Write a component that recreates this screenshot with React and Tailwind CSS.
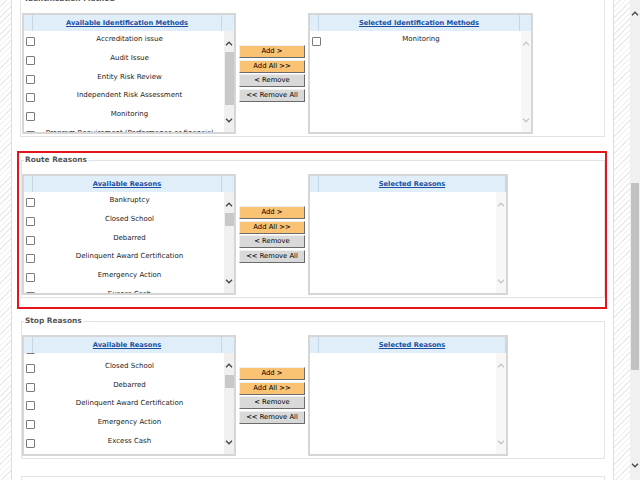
import React from "react";

const idMethods = [
  "Accreditation issue",
  "Audit Issue",
  "Entity Risk Review",
  "Independent Risk Assessment",
  "Monitoring",
  "Program Requirement (Performance or financial condition)",
];

const reasons = [
  "Bankruptcy",
  "Closed School",
  "Debarred",
  "Delinquent Award Certification",
  "Emergency Action",
  "Excess Cash",
  "Fraud",
];

function Chevron({ up, light }) {
  return (
    <svg width="8" height="5" viewBox="0 0 8 5">
      <polyline
        points={up ? "1,4.3 4,1.2 7,4.3" : "1,0.7 4,3.8 7,0.7"}
        fill="none"
        stroke={light ? "#c6c6c6" : "#454545"}
        strokeWidth="1.3"
      />
    </svg>
  );
}

function ListScroll({ light, thumbClass }) {
  return (
    <div className={light ? "flex w-[10px] shrink-0 flex-col items-center bg-[#f7f7f7]" : "flex w-[10px] shrink-0 flex-col items-center bg-[#f0f0f0]"}>
      <div className="mt-[9px] flex h-[6px] items-center">
        <Chevron up light={light} />
      </div>
      {thumbClass ? <div className={thumbClass} /> : null}
      <div className="mb-[9px] mt-auto flex h-[6px] items-center">
        <Chevron light={light} />
      </div>
    </div>
  );
}

function Row({ label }) {
  return (
    <div className="flex h-[18.8px] items-start overflow-hidden">
      <div className="ml-[2px] mt-[6px] h-[9px] w-[9px] shrink-0 rounded-[1px] border border-[#7b7b7b] bg-white" />
      <div className="mt-[3px] flex-1 text-center text-[7px] leading-[10px] text-[#222]">{label}</div>
    </div>
  );
}

function ListBox({ title, items, widthClass, lastClass, offsetClass, light, thumbClass }) {
  return (
    <div className={`flex h-[121px] shrink-0 flex-col border-2 border-[#d6d6d6] bg-white ${widthClass}`}>
      <div className="flex h-[16px] shrink-0 bg-[#dfeef8]">
        <div className="w-[9px] border-r border-[#c3d7e8]" />
        <div className="flex flex-1 items-center justify-center border-r border-[#c3d7e8]">
          <a className="cursor-pointer text-[6.7px] font-bold text-[#1c4f9f] underline">{title}</a>
        </div>
        <div className={lastClass} />
      </div>
      <div className="flex min-h-0 flex-1">
        <div className="min-w-0 flex-1 overflow-hidden">
          <div className={offsetClass}>
            {items.map((item, i) => (
              <Row key={i} label={item} />
            ))}
          </div>
        </div>
        <ListScroll light={light} thumbClass={thumbClass} />
      </div>
    </div>
  );
}

function Buttons() {
  const base =
    "h-[13px] w-full border border-t-[#efefef] border-l-[#efefef] border-r-[#6b6b6b] border-b-[#6b6b6b] text-[6.8px] leading-[11px] text-black";
  return (
    <div className="ml-[3px] flex w-[66px] shrink-0 flex-col gap-[1.6px] pt-[32px]">
      <button className={`${base} bg-[#fac273]`}>Add &gt;</button>
      <button className={`${base} bg-[#fac273]`}>Add All &gt;&gt;</button>
      <button className={`${base} bg-[#d9d9d9]`}>&lt; Remove</button>
      <button className={`${base} bg-[#d9d9d9]`}>&lt;&lt; Remove All</button>
    </div>
  );
}

function Legend({ children }) {
  return (
    <div className="-mt-[6px] ml-[2px] w-fit bg-white px-[1px] text-[7.4px] font-bold leading-[10px] text-[#555]">
      {children}
    </div>
  );
}

function ReasonsSection({ title, items, offsetClass, thumbClass }) {
  return (
    <>
      <Legend>{title}</Legend>
      <div className="mt-[9px] flex items-start">
        <ListBox
          title="Available Reasons"
          items={items}
          widthClass="w-[214px]"
          lastClass="w-[12px]"
          offsetClass={offsetClass}
          thumbClass={thumbClass}
        />
        <Buttons />
        <div className="ml-[3px]">
          <ListBox title="Selected Reasons" items={[]} widthClass="w-[200px]" lastClass="w-0" light />
        </div>
      </div>
    </>
  );
}

export default function App() {
  const hatch =
    "bg-[repeating-linear-gradient(135deg,#ebebeb_0px,#ebebeb_1px,#ffffff_1px,#ffffff_4px)]";
  return (
    <div className="flex h-[480px] w-[640px] overflow-hidden bg-white font-['DejaVu_Sans',Verdana,sans-serif]">
      <div className={`w-[11px] shrink-0 ${hatch}`} />
      <div className="w-px shrink-0 bg-[#d3dfec]" />

      <main className="w-[601px] shrink-0 px-[8px]">
        {/* Identification Method */}
        <div className="-mt-[1px] border border-[#e3e3e3] pb-[2px] pl-[1px]">
          <Legend>Identification Method</Legend>
          <div className="mt-[9px] flex items-start">
            <ListBox
              title="Available Identification Methods"
              items={idMethods}
              widthClass="w-[214px]"
              lastClass="w-[12px]"
              thumbClass="mt-[6px] h-[53px] w-[9px] bg-[#c8c8c8]"
            />
            <Buttons />
            <div className="ml-[3px]">
              <ListBox
                title="Selected Identification Methods"
                items={["Monitoring"]}
                widthClass="w-[225px]"
                lastClass="w-[11px]"
                light
              />
            </div>
          </div>
        </div>

        {/* Route Reasons (highlighted) */}
        <div className="-ml-[3px] -mr-[2px] mt-[14px] border-2 border-[#e8141b] pb-[9px] pl-[2px] pt-[7px]">
          <div className="border border-[#e3e3e3] pb-[2px]">
            <ReasonsSection
              title="Route Reasons"
              items={reasons}
              thumbClass="mt-[6px] h-[13px] w-[9px] bg-[#c8c8c8]"
            />
          </div>
        </div>

        {/* Stop Reasons, list scrolled a little */}
        <div className="ml-[1px] mt-[12px] border border-[#e3e3e3] pb-[2px]">
          <ReasonsSection
            title="Stop Reasons"
            items={["", ...reasons.slice(1)]}
            offsetClass="-mt-[14px]"
            thumbClass="mt-[7px] h-[13px] w-[9px] bg-[#c8c8c8]"
          />
        </div>

        <div className="ml-[1px] mt-[17px] h-[20px] border border-b-0 border-[#e3e3e3]" />
      </main>

      <div className="w-px shrink-0 bg-[#d3dfec]" />
      <div className={`w-[16px] shrink-0 ${hatch}`} />
      <div className="flex w-[10px] shrink-0 flex-col items-center bg-[#f0f0f0]">
        <div className="mt-[10px] flex h-[6px] items-center">
          <Chevron up />
        </div>
        <div className="mt-[167px] h-[187px] w-[8px] bg-[#c1c1c1]" />
        <div className="mb-[12px] mt-auto flex h-[6px] items-center">
          <Chevron />
        </div>
      </div>
    </div>
  );
}
